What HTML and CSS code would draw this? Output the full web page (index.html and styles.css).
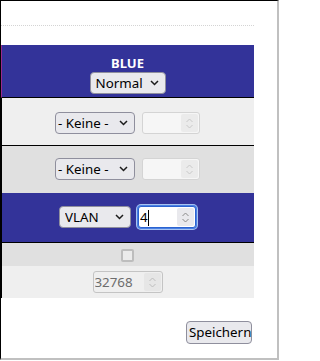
FILE: index.html
```html
<!DOCTYPE html>
<html lang="de">
<head>
<meta charset="utf-8">
<title>Zonen</title>
<link rel="stylesheet" href="styles.css">
</head>
<body>
<div class="frame">
  <div class="rule"></div>
  <div class="zone">
    <div class="row row--head row--line">
      <div class="zone-name">BLUE</div>
      <span class="sel sel--normal">
        <select><option>Normal</option></select>
        <svg class="chev" width="9" height="6" viewBox="0 0 9 6"><path d="M1 1l3.5 3.5L8 1" fill="none" stroke="#1c1c1c" stroke-width="1.5"/></svg>
      </span>
    </div>
    <div class="row row--light row--line row--pad14">
      <span class="sel sel--keine">
        <select><option>- Keine -</option></select>
        <svg class="chev" width="9" height="6" viewBox="0 0 9 6"><path d="M1 1l3.5 3.5L8 1" fill="none" stroke="#1c1c1c" stroke-width="1.5"/></svg>
      </span>
      <span class="num num--off">
        <input type="number" disabled>
        <span class="spin"><svg width="7" height="11" viewBox="0 0 7 11"><path d="M0.5 4L3.5 1L6.5 4M0.5 7L3.5 10L6.5 7" fill="none" stroke="#c8c8c8" stroke-width="1"/></svg></span>
      </span>
    </div>
    <div class="row row--dark row--pad12">
      <span class="sel sel--keine">
        <select><option>- Keine -</option></select>
        <svg class="chev" width="9" height="6" viewBox="0 0 9 6"><path d="M1 1l3.5 3.5L8 1" fill="none" stroke="#1c1c1c" stroke-width="1.5"/></svg>
      </span>
      <span class="num num--off">
        <input type="number" disabled>
        <span class="spin"><svg width="7" height="11" viewBox="0 0 7 11"><path d="M0.5 4L3.5 1L6.5 4M0.5 7L3.5 10L6.5 7" fill="none" stroke="#c8c8c8" stroke-width="1"/></svg></span>
      </span>
    </div>
    <div class="row row--blue row--line row--pad13">
      <span class="sel sel--vlan">
        <select><option>VLAN</option></select>
        <svg class="chev" width="9" height="6" viewBox="0 0 9 6"><path d="M1 1l3.5 3.5L8 1" fill="none" stroke="#1c1c1c" stroke-width="1.5"/></svg>
      </span>
      <span class="num num--focus">
        <input type="number" value="4">
        <span class="caret"></span>
        <span class="spin spin--on"><svg width="7" height="11" viewBox="0 0 7 11"><path d="M0.5 4L3.5 1L6.5 4M0.5 7L3.5 10L6.5 7" fill="none" stroke="#8a8a8a" stroke-width="1"/></svg></span>
      </span>
    </div>
    <div class="row row--dark row--short">
      <input class="check" type="checkbox" disabled>
    </div>
    <div class="row row--light row--prio">
      <span class="num num--wide num--dis">
        <input type="number" value="32768" disabled>
        <span class="spin spin--dis"><svg width="7" height="11" viewBox="0 0 7 11"><path d="M0.5 4L3.5 1L6.5 4M0.5 7L3.5 10L6.5 7" fill="none" stroke="#bdbdbd" stroke-width="1"/></svg></span>
      </span>
    </div>
  </div>
  <div class="actions">
    <button class="btn" type="button">Speichern</button>
  </div>
</div>
</body>
</html>
```

FILE: styles.css
```css
html, body {
  margin: 0;
  padding: 0;
  background: #fff;
}

body {
  font-family: "Noto Sans", "Open Sans", sans-serif;
  font-size: 13.333px;
  color: #000;
}

.frame {
  box-sizing: border-box;
  width: 279px;
  height: 360px;
  border-top: 1px solid #000;
  border-left: 1px solid #000;
  border-right: 2px solid #c0c0c0;
  border-bottom: 2px solid #c0c0c0;
  display: flex;
  flex-direction: column;
  overflow: hidden;
}

.rule {
  margin-top: 24px;
  width: 253px;
  height: 0;
  border-top: 1px dotted #d4d4d4;
}

.zone {
  margin-top: 19px;
  width: 253px;
  display: flex;
  flex-direction: column;
}

.row {
  box-sizing: border-box;
  display: flex;
  justify-content: center;
  align-items: flex-start;
  gap: 7px;
  border-left: 1px solid #000;
  padding-right: 1px;
}

.row--line {
  border-bottom: 1px solid #000;
}

.row--head {
  height: 53px;
  padding-top: 7px;
  flex-direction: column;
  align-items: center;
  gap: 1px;
  background: #333399;
  border-left-color: #9b2a8c;
}

.row--light {
  background: #efefef;
}

.row--dark {
  background: #e0e0e0;
}

.row--blue {
  background: #333399;
}

.row--pad14 {
  height: 48px;
  padding-top: 14px;
}

.row--pad12 {
  height: 47px;
  padding-top: 12px;
}

.row--pad13 {
  height: 50px;
  padding-top: 13px;
}

.row--short {
  height: 23px;
  padding-top: 6px;
}

.row--prio {
  height: 32px;
  padding-top: 5px;
}

.zone-name {
  font-weight: bold;
  font-size: 13px;
  line-height: 16px;
  color: #fff;
}

/* select boxes */
.sel {
  box-sizing: border-box;
  display: inline-flex;
  align-items: center;
  height: 22px;
  border: 1px solid #8f8f9d;
  border-radius: 4px;
  background: #e9e9ed;
}

.sel select {
  -webkit-appearance: none;
  appearance: none;
  flex: 1;
  min-width: 0;
  height: 20px;
  border: 0;
  margin: 0;
  background: transparent;
  font-family: "Noto Sans", "Open Sans", sans-serif;
  font-size: 13.333px;
  line-height: 20px;
  color: #000;
  padding: 0 0 0 5px;
  outline: none;
}

.sel .chev {
  flex: none;
  margin-right: 6px;
}

.sel--normal {
  width: 76px;
}

.sel--keine {
  width: 80px;
}

.sel--keine select {
  padding-left: 2px;
}

.sel--vlan {
  width: 72px;
}

/* number inputs */
.num {
  position: relative;
  box-sizing: border-box;
  display: inline-flex;
  align-items: stretch;
  width: 58px;
  height: 22px;
  border: 1px solid #d4d4d4;
  border-radius: 3px;
  background: #f6f6f6;
}

.num input {
  -webkit-appearance: none;
  -moz-appearance: textfield;
  appearance: textfield;
  flex: 1;
  min-width: 0;
  border: 0;
  margin: 0;
  padding: 0 0 0 1px;
  background: transparent;
  font-family: "Noto Sans", "Open Sans", sans-serif;
  font-size: 13.333px;
  line-height: 20px;
  color: #000;
  outline: none;
}

.num input::-webkit-inner-spin-button,
.num input::-webkit-outer-spin-button {
  -webkit-appearance: none;
  margin: 0;
}

.spin {
  flex: none;
  width: 17px;
  margin: 1px 1px 1px 0;
  display: flex;
  align-items: center;
  justify-content: center;
  background: #ebebeb;
  border-radius: 2px;
}

.num--focus {
  background: #fff;
  border: 1px solid #2b63d0;
  box-shadow: 0 0 0 1px #4a80e2, 0 0 0 2px #a8c3f2;
}

.caret {
  position: absolute;
  left: 9px;
  top: 3px;
  width: 1px;
  height: 16px;
  background: #000;
}

.spin--on {
  background: #e9e9ed;
}

.num--wide {
  width: 70px;
}

.num--dis {
  background: transparent;
  border-color: #c4c4c4;
}

.num--dis input {
  color: #6d6d6d;
  -webkit-text-fill-color: #6d6d6d;
  opacity: 1;
}

.spin--dis {
  background: #e6e6e6;
}

/* checkbox */
.check {
  -webkit-appearance: none;
  appearance: none;
  box-sizing: border-box;
  width: 13px;
  height: 13px;
  margin: 0;
  border: 2px solid #bdbdbd;
  border-radius: 2px;
  background: #ebebeb;
}

/* actions */
.actions {
  box-sizing: border-box;
  margin-top: 23px;
  width: 253px;
  padding-right: 2px;
  display: flex;
  justify-content: flex-end;
}

.btn {
  box-sizing: border-box;
  width: 66px;
  height: 23px;
  padding: 0 2px;
  margin: 0;
  border: 1px solid #8f8f9d;
  border-radius: 4px;
  background: #e9e9ed;
  font-family: "Noto Sans", "Open Sans", sans-serif;
  font-size: 13.333px;
  line-height: 21px;
  color: #000;
  white-space: nowrap;
}
```
